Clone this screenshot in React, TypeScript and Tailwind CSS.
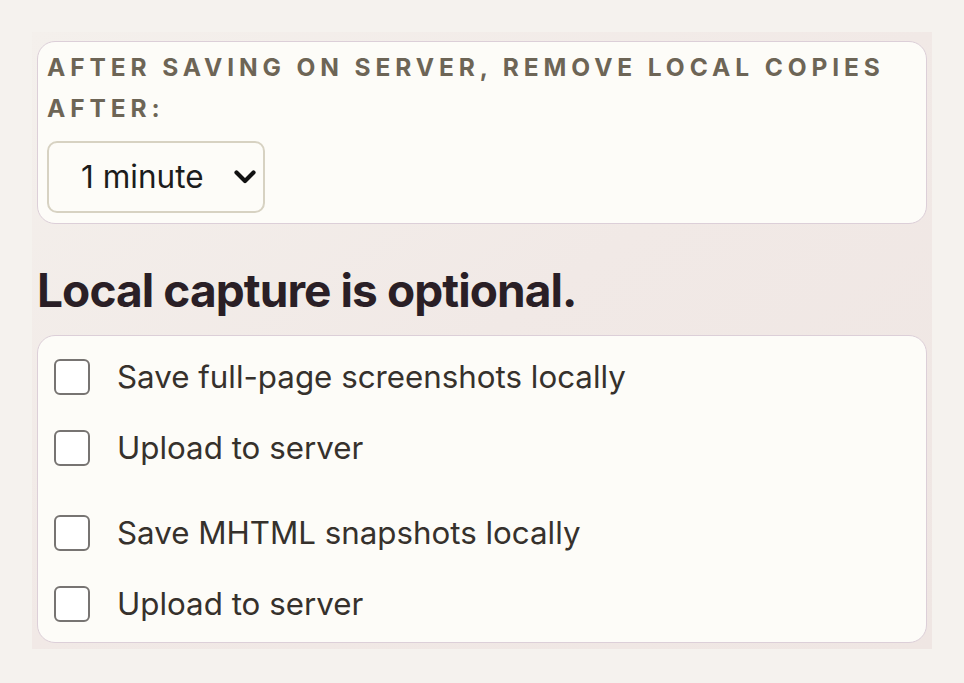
const rows = [
  [
    { id: "shot-local", label: "Save full-page screenshots locally" },
    { id: "shot-upload", label: "Upload to server" },
  ],
  [
    { id: "mhtml-local", label: "Save MHTML snapshots locally" },
    { id: "mhtml-upload", label: "Upload to server" },
  ],
];

function Check({ id, label }: { id: string; label: string }) {
  return (
    <label htmlFor={id} className="flex h-[56px] items-center gap-[27px]">
      <input
        id={id}
        type="checkbox"
        className="h-[36px] w-[36px] shrink-0 appearance-none rounded-[6px] border-[2.5px] border-[#777472] bg-white"
      />
      <span className="text-[31.3px] text-[#36312c]">{label}</span>
    </label>
  );
}

export default function App() {
  return (
    <div className="min-h-screen bg-[#f5f2ee] p-8 font-['Inter','Noto_Sans',sans-serif]">
      <div className="w-[900px] bg-linear-to-br from-[#f4f0ec] via-[#f1e9e6] to-[#efe6e3] px-[5px] pt-[9px] pb-[6px]">
        <section className="rounded-[18px] border-[1.5px] border-[#dccfd8] bg-[#fdfcf8] px-[9px] pt-[5px] pb-[10px]">
          <div className="text-[24.5px] font-bold uppercase leading-[41px] tracking-[0.2em] text-[#6d6556]">
            After saving on server, remove local copies after:
          </div>
          <div className="relative mt-[12px] w-[218px]">
            <select className="h-[72px] w-full appearance-none rounded-[10px] border-2 border-[#d7d2c2] bg-[#fdfcf8] pl-[32px] text-[31.5px] text-[#1c1c1c] outline-none">
              <option>1 minute</option>
            </select>
            <svg
              viewBox="0 0 22 14"
              className="pointer-events-none absolute right-[9px] top-[29px] h-[14px] w-[22px]"
            >
              <polyline points="2.5,2.5 11,11 19.5,2.5" fill="none" stroke="#111" strokeWidth="4.2" strokeLinecap="round" strokeLinejoin="round" />
            </svg>
          </div>
        </section>

        <h2 className="mt-[38px] mb-[17px] text-[46px] font-bold leading-[56px] tracking-[-0.02em] text-[#2a1f26]">
          Local capture is optional.
        </h2>

        <section className="flex flex-col gap-[29px] rounded-[18px] border-[1.5px] border-[#dccfd8] bg-[#fdfcf8] px-[16px] pt-[13px] pb-[10px]">
          {rows.map((group, i) => (
            <div key={i} className="flex flex-col gap-[15px]">
              {group.map((r) => (
                <Check key={r.id} id={r.id} label={r.label} />
              ))}
            </div>
          ))}
        </section>
      </div>
    </div>
  );
}
